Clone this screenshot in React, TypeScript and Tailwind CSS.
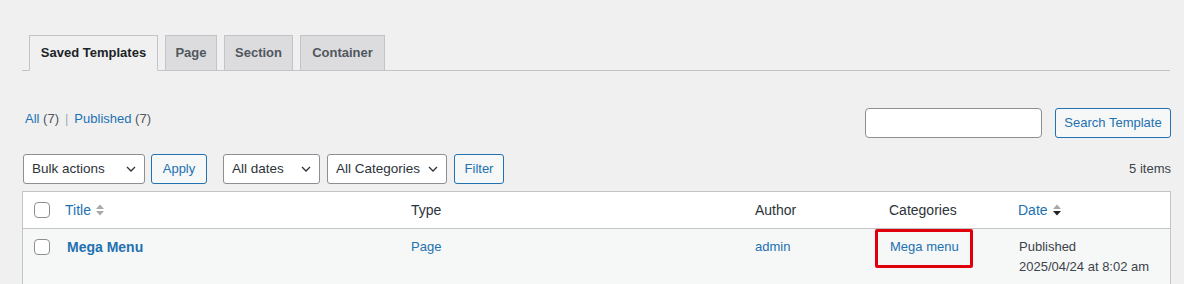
const font = { fontFamily: '"Liberation Sans", Arial, sans-serif' }

function Chevron() {
  return (
    <svg width="16" height="16" viewBox="0 0 20 20" className="-mr-[2px] shrink-0">
      <path d="M5 7.5l5 5 5-5" fill="none" stroke="#2c3338" strokeWidth="1.6" />
    </svg>
  )
}

function SortIcon({ active }: { active?: boolean }) {
  return (
    <svg width="10" height="16" viewBox="0 0 10 16" className="ml-1 shrink-0">
      <path d="M1 7L5 2.5L9 7Z" fill="#a7aaad" />
      <path d="M1 9L5 13.5L9 9Z" fill={active ? "#1d2327" : "#a7aaad"} />
    </svg>
  )
}

function Checkbox() {
  return <span className="block h-4 w-4 rounded-[4px] border border-[#8c8f94] bg-white" />
}

function Select({ label, width }: { label: string; width: string }) {
  return (
    <div
      className={`flex h-[30px] items-center justify-between whitespace-nowrap rounded-[3px] border border-[#8c8f94] bg-white pl-2 pr-[7px] text-[13.5px] text-[#2c3338] ${width}`}
    >
      <span>{label}</span>
      <Chevron />
    </div>
  )
}

function Button({ label, width }: { label: string; width: string }) {
  return (
    <button
      className={`flex h-[30px] items-center justify-center rounded-[3px] border border-[#2271b1] bg-[#f6f7f7] text-[13px] text-[#2271b1] ${width}`}
    >
      {label}
    </button>
  )
}

const tabs = [
  { label: "Saved Templates", width: "w-[129px]" },
  { label: "Page", width: "w-[52px]" },
  { label: "Section", width: "w-[69px]" },
  { label: "Container", width: "w-[85px]" },
]

export default function App() {
  return (
    <div className="min-h-[284px] bg-[#f0f0f1] pl-[22px] pr-[13px] pt-[35px] text-[13px] text-[#3c434a]" style={font}>
      <div className="mr-px flex gap-[7px] border-b border-[#c3c4c7] pl-[7px]">
        {tabs.map((t, i) => (
          <div
            key={t.label}
            className={
              i === 0
                ? `-mb-px flex h-[36px] items-center justify-center border border-b-[#f0f0f1] border-[#c3c4c7] bg-[#f0f0f1] text-[13px] font-bold text-[#1d2327] ${t.width}`
                : `flex h-[35px] items-center justify-center border border-b-0 border-[#c3c4c7] bg-[#dcdcde] text-[13px] font-bold text-[#50575e] ${t.width}`
            }
          >
            {t.label}
          </div>
        ))}
      </div>

      <div className="mt-[37px] flex items-start justify-between">
        <div className="pl-[3px] pt-[2px] leading-[18px]">
          <span className="text-[#2271b1]">All</span> <span className="text-[#50575e]">(7)</span>
          <span className="px-[6px] text-[#a7aaad]">|</span>
          <span className="text-[#2271b1]">Published</span> <span className="text-[#50575e]">(7)</span>
        </div>
        <div className="flex items-center gap-[13px]">
          <div className="h-[30px] w-[177px] rounded-[4px] border border-[#8c8f94] bg-white" />
          <Button label="Search Template" width="w-[116px]" />
        </div>
      </div>

      <div className="mt-[16px] flex items-center justify-between">
        <div className="flex items-center">
          <div className="ml-px flex items-center gap-[6px]">
            <Select label="Bulk actions" width="w-[122px]" />
            <Button label="Apply" width="w-[56px]" />
          </div>
          <div className="ml-[16px] flex items-center gap-[7px]">
            <Select label="All dates" width="w-[97px]" />
            <Select label="All Categories" width="w-[120px]" />
            <Button label="Filter" width="w-[50px]" />
          </div>
        </div>
        <span className="text-[13px] text-[#3c434a]">5 items</span>
      </div>

      <div className="mt-[7px] border border-[#c3c4c7] bg-white">
        <div className="flex h-[37px] items-center border-b border-[#c3c4c7] text-[14px] text-[#2c3338]">
          <div className="w-[32px] pl-[11px]"><Checkbox /></div>
          <div className="flex w-[346px] items-center pl-[10px] text-[#2271b1]">
            Title <SortIcon />
          </div>
          <div className="w-[344px] pl-[10px]">Type</div>
          <div className="w-[134px] pl-[10px]">Author</div>
          <div className="w-[129px] pl-[10px]">Categories</div>
          <div className="flex items-center pl-[10px] text-[#2271b1]">
            Date <SortIcon active />
          </div>
        </div>
        <div className="flex h-[60px] items-start bg-[#f6f7f7] pt-[8px] text-[13px] leading-[20px]">
          <div className="w-[32px] pl-[11px] pt-[2px]"><Checkbox /></div>
          <div className="w-[346px] pl-[12px] text-[14px] font-semibold text-[#2271b1]">Mega Menu</div>
          <div className="w-[344px] pl-[10px] text-[#2271b1]">Page</div>
          <div className="w-[134px] pl-[10px] text-[#2271b1]">admin</div>
          <div className="relative w-[129px] pl-[11px] text-[#2271b1]">
            Mega menu
            <span className="absolute -top-[8px] -left-[4px] h-[39px] w-[98px] rounded-[2px] border-[3px] border-[#e0000b]" />
          </div>
          <div className="pl-[11px] text-[#3c434a]">
            <div>Published</div>
            <div>2025/04/24 at 8:02 am</div>
          </div>
        </div>
      </div>
    </div>
  )
}
